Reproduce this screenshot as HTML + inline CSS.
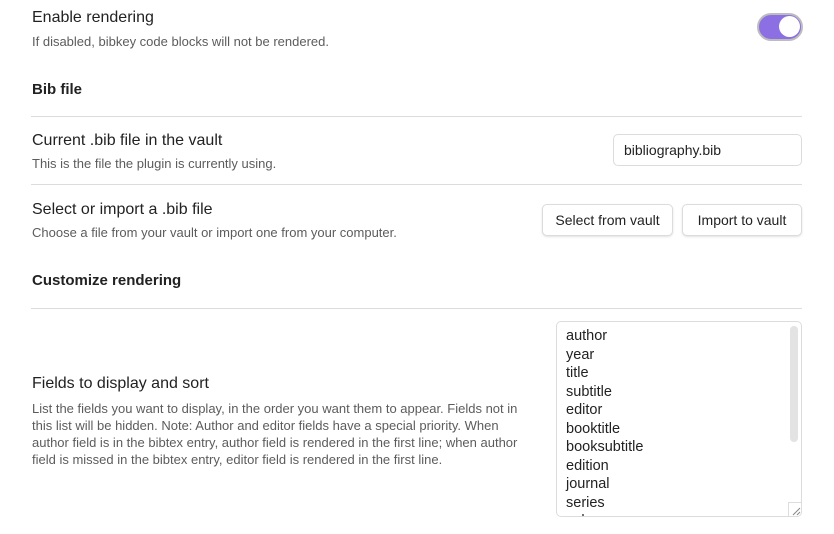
<!DOCTYPE html>
<html><head><meta charset="utf-8"><style>
body{margin:0;width:834px;height:534px;background:#fff;font-family:"Liberation Sans",sans-serif;position:relative;overflow:hidden;color:#222}
.a{position:absolute;white-space:nowrap}
.t{font-size:16px;color:#222}
.d{font-size:13px;color:#5c5c5c}
.h{font-size:15px;font-weight:bold;color:#222}
.hr{position:absolute;left:31px;width:771px;height:1px;background:#dcdcdc}
.btn{position:absolute;border:1px solid #dcdcdc;border-radius:5px;box-shadow:0 1px 2px rgba(0,0,0,.12);font-size:14px;color:#222;text-align:center;line-height:30px;background:#fff}
</style></head><body>
<div class="a t" style="left:32px;top:9px">Enable rendering</div>
<div class="a d" style="left:32px;top:34px">If disabled, bibkey code blocks will not be rendered.</div>
<div class="a" style="left:757px;top:13px;width:42px;height:24px;border-radius:14px;background:#8b6fe3;border:2px solid #bdbdbd"></div>
<div class="a" style="left:779px;top:16px;width:21px;height:21px;border-radius:50%;background:#fff"></div>

<div class="a h" style="left:32px;top:81px">Bib file</div>
<div class="hr" style="top:116px"></div>
<div class="a t" style="left:32px;top:132px">Current .bib file in the vault</div>
<div class="a d" style="left:32px;top:156px">This is the file the plugin is currently using.</div>
<div class="a" style="left:613px;top:134px;border:1px solid #dcdcdc;border-radius:5px;font-size:14px;line-height:30px;padding-left:10px;box-sizing:border-box;width:189px;height:32px">bibliography.bib</div>
<div class="hr" style="top:184px"></div>
<div class="a t" style="left:32px;top:201px">Select or import a .bib file</div>
<div class="a d" style="left:32px;top:225px">Choose a file from your vault or import one from your computer.</div>
<div class="btn" style="left:542px;top:204px;width:129px;height:30px">Select from vault</div>
<div class="btn" style="left:682px;top:204px;width:118px;height:30px">Import to vault</div>

<div class="a h" style="left:32px;top:272px">Customize rendering</div>
<div class="hr" style="top:308px"></div>
<div class="a t" style="left:32px;top:375px">Fields to display and sort</div>
<div class="a d" style="left:32px;top:400px;line-height:17px">List the fields you want to display, in the order you want them to appear. Fields not in<br>this list will be hidden. Note: Author and editor fields have a special priority. When<br>author field is in the bibtex entry, author field is rendered in the first line; when author<br>field is missed in the bibtex entry, editor field is rendered in the first line.</div>

<div class="a" style="left:556px;top:321px;width:244px;height:194px;border:1px solid #dcdcdc;border-radius:5px;overflow:hidden">
<div style="position:absolute;left:9px;top:5px;font-size:14.5px;line-height:18.5px;color:#222">author<br>year<br>title<br>subtitle<br>editor<br>booktitle<br>booksubtitle<br>edition<br>journal<br>series<br>volume</div>
<div style="position:absolute;left:233px;top:4px;width:8px;height:116px;border-radius:4px;background:#e3e3e3"></div>
<div style="position:absolute;left:231px;top:180px;width:13px;height:14px;background:#fff;border-left:1px solid #ddd;border-top:1px solid #ddd">
<svg width="13" height="14" style="position:absolute;left:0;top:0"><path d="M4 12L11 5M8 12L11 9" stroke="#888" stroke-width="1"/></svg></div>
</div>
</body></html>
